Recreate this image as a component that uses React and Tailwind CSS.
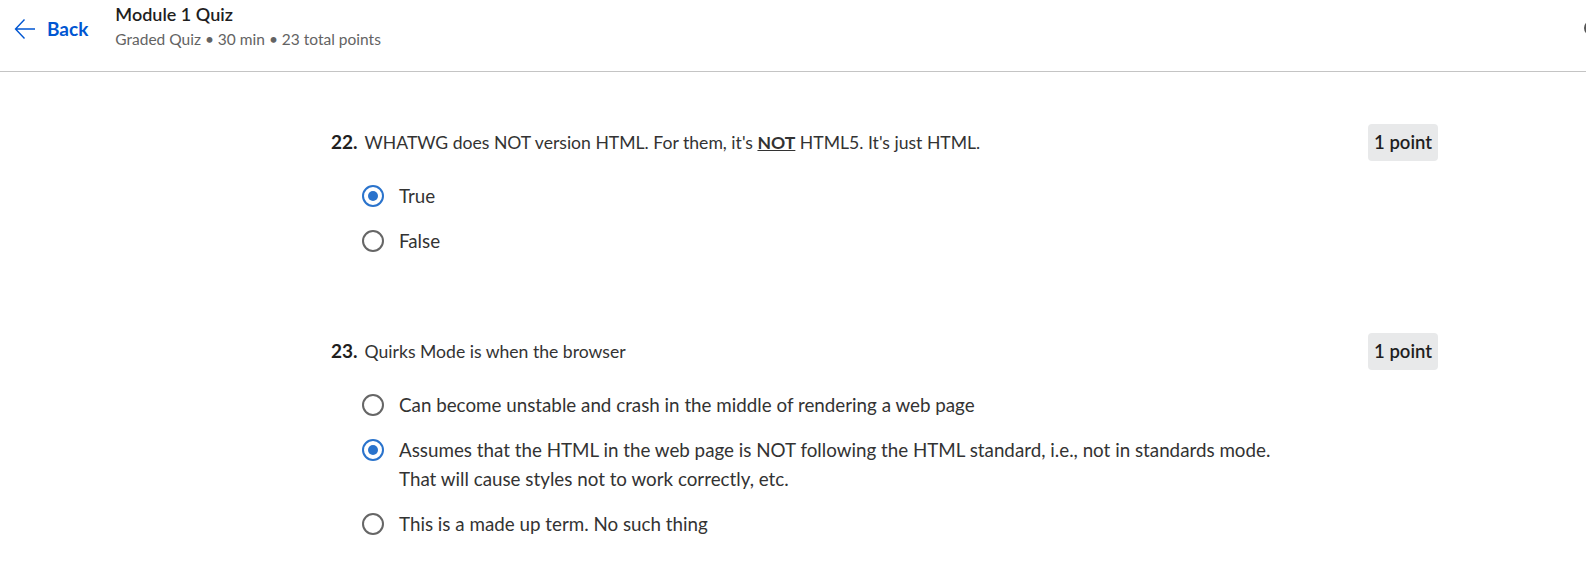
import { useState } from "react";

const questions = [
  {
    num: 22,
    text: (
      <>
        WHATWG does NOT version HTML. For them, it's <b className="font-bold underline">NOT</b> HTML5. It's just HTML.
      </>
    ),
    points: "1 point",
    options: ["True", "False"],
    selected: 0,
  },
  {
    num: 23,
    text: "Quirks Mode is when the browser",
    points: "1 point",
    options: [
      "Can become unstable and crash in the middle of rendering a web page",
      <>
        Assumes that the HTML in the web page is NOT following the HTML standard, i.e., not in standards mode.
        <br />
        That will cause styles not to work correctly, etc.
      </>,
      "This is a made up term. No such thing",
    ],
    selected: 1,
  },
];

function Radio({ checked }) {
  return (
    <span
      className={
        "mt-[3.5px] flex h-[22px] w-[22px] shrink-0 items-center justify-center rounded-full border-2 " +
        (checked ? "border-[#2a73cc]" : "border-[#666666]")
      }
    >
      {checked && <span className="h-[10px] w-[10px] rounded-full bg-[#2a73cc]" />}
    </span>
  );
}

function Question({ q, first }) {
  const [sel, setSel] = useState(q.selected);
  return (
    <div className={first ? "" : "mt-[78px]"}>
      <div className="flex h-[37px] items-center justify-between">
        <div className="flex items-baseline gap-[7px]">
          <span className="text-[19px] font-bold text-[#1f1f1f]">{q.num}.</span>
          <span className="text-[17.6px] text-[#333333]">{q.text}</span>
        </div>
        <span className="flex h-[37px] items-center rounded-[4px] bg-[#e8e9ea] px-[6px] text-[18.5px] font-semibold text-[#1f1f1f]">
          {q.points}
        </span>
      </div>
      <div className="mt-[20px] ml-[31px] flex flex-col gap-[16px]">
        {q.options.map((o, i) => (
          <label key={i} className="flex cursor-pointer items-start gap-[15px]" onClick={() => setSel(i)}>
            <Radio checked={sel === i} />
            <span className="text-[18.8px] leading-[29px] text-[#333333]">{o}</span>
          </label>
        ))}
      </div>
    </div>
  );
}

export default function App() {
  return (
    <div className="min-h-[577px] overflow-hidden bg-white font-['Lato','Liberation_Sans',sans-serif]">
      {/* header */}
      <div className="flex h-[72px] items-start border-b border-[#c4c4c4]">
        <button className="mt-[15px] ml-[14px] flex items-center gap-[11px] text-[#0056d2]">
          <svg width="22" height="22" viewBox="0 0 22 22" fill="none" stroke="currentColor" strokeWidth="1.4">
            <path d="M21 11H1.5M10.5 1.5L1.5 11l9 9.5" />
          </svg>
          <span className="text-[19px] font-bold">Back</span>
        </button>
        <div className="ml-[27px] mt-[2px] flex flex-col">
          <span className="text-[18px] font-semibold leading-[24px] text-[#1f1f1f]">Module 1 Quiz</span>
          <span className="mt-[2px] text-[15.5px] leading-[22px] text-[#636363]">Graded Quiz • 30 min • 23 total points</span>
        </div>
        <span className="ml-auto mt-[20px] mr-[-20px] h-[16px] w-[22px] rounded-full border-2 border-[#555555]" />
      </div>

      {/* questions */}
      <div className="ml-[331px] mt-[52px] w-[1107px]">
        {questions.map((q, i) => (
          <Question key={q.num} q={q} first={i === 0} />
        ))}
      </div>
    </div>
  );
}
